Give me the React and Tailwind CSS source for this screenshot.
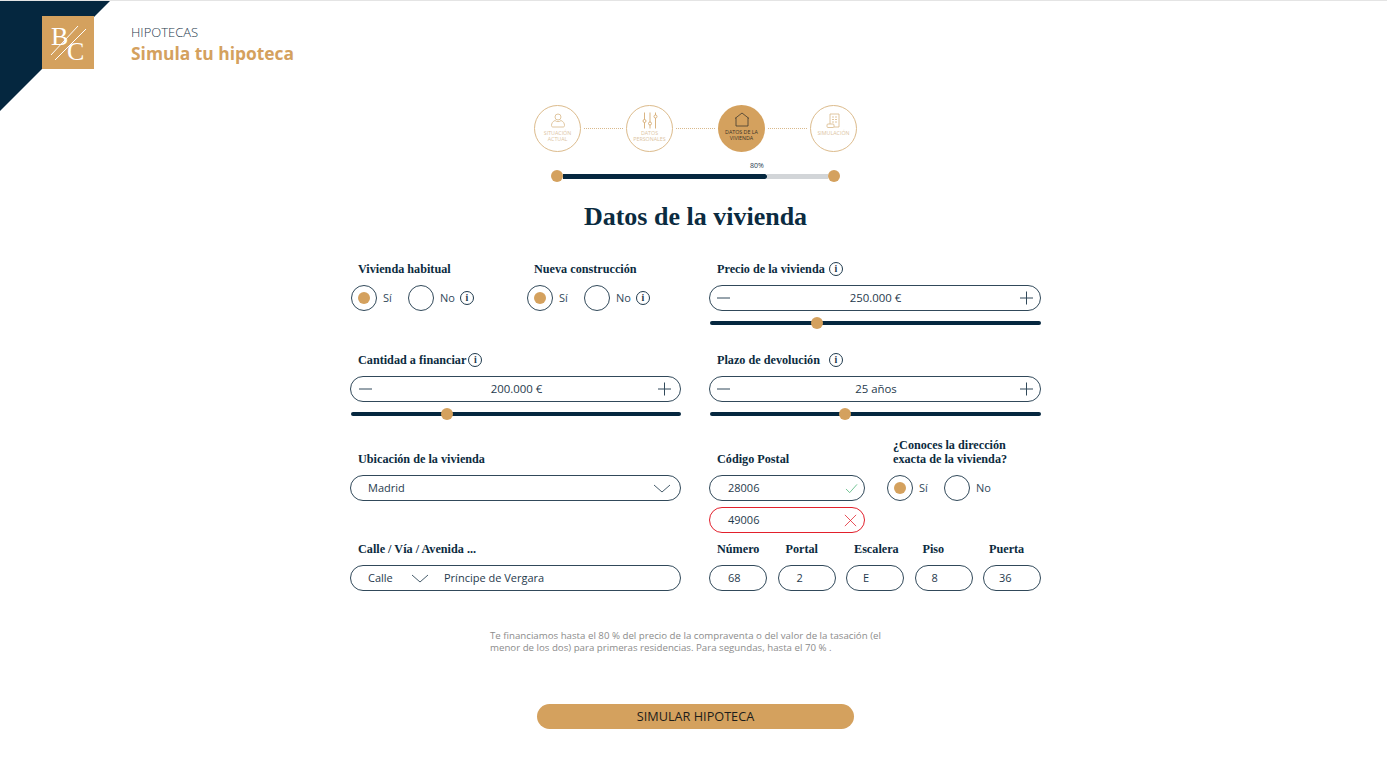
const serif = "font-['Liberation_Serif',serif] font-bold text-[12.2px] text-[#0b2b40]";
const pill = "flex h-[26px] items-center rounded-full border border-[#31495a] bg-white text-[11px] text-[#1f3a4d]";

const Info = () => (
  <span className="flex h-[14px] w-[14px] shrink-0 items-center justify-center rounded-full border border-[#1f3a4d] font-['Liberation_Serif',serif] text-[10px] font-bold leading-none text-[#1f3a4d]">
    i
  </span>
);

const Chevron = () => (
  <svg width="18" height="9" viewBox="0 0 18 9" fill="none" stroke="#31495a" strokeWidth="0.9">
    <path d="M1 1l8 7 8-7" />
  </svg>
);

const Radio = ({ label, checked, info }) => (
  <div className="flex items-center">
    <span className="flex h-[26px] w-[26px] items-center justify-center rounded-full border border-[#31495a]">
      {checked && <span className="h-3 w-3 rounded-full bg-[#d4a15e]" />}
    </span>
    <span className="ml-[6px] text-[11px] text-[#31495a]">{label}</span>
    {info && (
      <span className="ml-[5px]">
        <Info />
      </span>
    )}
  </div>
);

const YesNo = ({ info }) => (
  <div className="flex items-center pl-[1px]">
    <div className="w-[57px]">
      <Radio label="Sí" checked />
    </div>
    <Radio label="No" info={info} />
  </div>
);

const Stepper = ({ value, thumb, pad, shift }) => (
  <div>
    <div className={`${pill} justify-between ${pad}`}>
      <svg width="14" height="14" viewBox="0 0 14 14" stroke="#31495a">
        <path d="M0 7h13" />
      </svg>
      <span className={`text-[11.4px] ${shift}`}>{value}</span>
      <svg width="14" height="14" viewBox="0 0 14 14" stroke="#31495a">
        <path d="M1 7h13M7.500 0.500v13" />
      </svg>
    </div>
    <div className="relative ml-[1px] mt-[10px] h-1 rounded-full bg-[#05273f]">
      <span className={`absolute top-[-4px] h-3 w-3 rounded-full bg-[#d4a15e] ${thumb}`} />
    </div>
  </div>
);

const StepCircle = ({ icon, lines, active }) => (
  <div
    className={
      active
        ? "flex h-[47px] w-[47px] shrink-0 flex-col items-center rounded-full bg-[#d4a15e] pt-[6px] text-[#3a3328]"
        : "flex h-[47px] w-[47px] shrink-0 flex-col items-center rounded-full border border-[#dcbb8c] pt-[6px] text-[#dcc4a2]"
    }
  >
    <div className="flex h-[17px] items-center">{icon}</div>
    <div className="mt-[1px] text-center text-[5.3px] uppercase leading-[6px]">
      {lines.map((l) => (
        <div key={l}>{l}</div>
      ))}
    </div>
  </div>
);

const Dots = () => <div className="mx-[3px] flex-1 border-t border-dotted border-[#d9b98c]" />;

const PersonIcon = () => (
  <svg width="16" height="16" viewBox="0 0 16 16" fill="none" stroke="#d8b888" strokeWidth="0.8">
    <circle cx="8" cy="4" r="3" />
    <path d="M5 7.500C2.500 8.500 1.500 10.500 1.500 12.500c0 1 .5 1.500 1.500 1.500h10c1 0 1.500-.5 1.500-1.500 0-2-1-4-3.500-5-1.500 1.500-4.500 1.500-6 0z" />
  </svg>
);

const SlidersIcon = () => (
  <svg width="16" height="17" viewBox="0 0 16 17" fill="none" stroke="#d0a263" strokeWidth="0.8">
    <path d="M2.500 0.500v7M2.500 10.500v6M8 0.500v9.500M8 13v3.500M13.500 0.500v2.500M13.500 6v10.500" />
    <circle cx="2.500" cy="9" r="1.500" />
    <circle cx="8" cy="11.500" r="1.500" />
    <circle cx="13.500" cy="4.500" r="1.500" />
  </svg>
);

const HouseIcon = () => (
  <svg width="16" height="15" viewBox="0 0 16 15" fill="none" stroke="#3f3a30" strokeWidth="0.8">
    <path d="M1 6.500L8 1l7 5.500M2 5.700V14h12V5.700" />
  </svg>
);

const DocIcon = () => (
  <svg width="15" height="16" viewBox="0 0 15 16" fill="none" stroke="#d8b888" strokeWidth="0.8">
    <path d="M4 11V1h9v13H8" />
    <path d="M6 4h5M6 6.500h5M6 9h5" strokeDasharray="2 1" />
    <rect x="1" y="11" width="7" height="3.500" rx="1" />
  </svg>
);

const Logo = () => (
  <svg width="52" height="53" viewBox="0 0 52 53" className="block bg-[#d4a15e]">
    <text x="9" y="29" fill="#fff" fontFamily="Liberation Serif" fontSize="26">B</text>
    <text x="25" y="44" fill="#fff" fontFamily="Liberation Serif" fontSize="26">C</text>
    <path d="M9 39L36 10M13 44L44 13" stroke="#fff" strokeWidth="1" />
  </svg>
);

const Field = ({ label, children, className }) => (
  <div className={className}>
    <div className="mb-[6px] flex h-5 items-center pl-2">
      <span className={serif}>{label}</span>
    </div>
    {children}
  </div>
);

const LabelInfo = ({ children, gap }) => (
  <span className={`flex items-center ${gap}`}>
    {children}
    <Info />
  </span>
);

const small = [
  { label: "Número", value: "68", pad: "pl-[18px]", labelPad: "pl-2" },
  { label: "Portal", value: "2", pad: "pl-[18px]", labelPad: "pl-2" },
  { label: "Escalera", value: "E", pad: "pl-[16px]", labelPad: "pl-2" },
  { label: "Piso", value: "8", pad: "pl-[16px]", labelPad: "pl-2" },
  { label: "Puerta", value: "36", pad: "pl-[15px]", labelPad: "pl-[6px]" },
];

export default function App() {
  return (
    <div className="relative h-[780px] overflow-hidden border-t border-[#e4e4e4] bg-white font-['Open_Sans',sans-serif]">
      <div className="absolute left-0 top-0 h-[110px] w-[110px] bg-[#05273f] [clip-path:polygon(0_0,100%_0,0_100%)]" />

      <header className="relative flex pl-[42px] pt-[15px]">
        <Logo />
        <div className="ml-[37px] pt-[7px]">
          <div className="text-[13px] font-light leading-[18px] text-[#1f3a4d]">HIPOTECAS</div>
          <div className="text-[17.4px] font-bold leading-[24px] text-[#d4a15e]">Simula tu hipoteca</div>
        </div>
      </header>

      <div className="pl-[4px]">
        <div className="mx-auto mt-[36px] flex w-[323px] items-center">
          <StepCircle icon={<PersonIcon />} lines={["Situación", "actual"]} />
          <Dots />
          <StepCircle icon={<SlidersIcon />} lines={["Datos", "personales"]} />
          <Dots />
          <StepCircle active icon={<HouseIcon />} lines={["Datos de la", "vivienda"]} />
          <Dots />
          <StepCircle icon={<DocIcon />} lines={["Simulación"]} />
        </div>

        <div className="relative mx-auto mt-[18px] flex h-3 w-[289px] items-center">
          <span className="absolute left-[199px] top-[-9px] text-[7px] leading-[9px] text-[#1f3a4d]">80%</span>
          <span className="h-3 w-3 rounded-full bg-[#d4a15e]" />
          <span className="h-[5px] w-[204px] rounded-r-full bg-[#05273f]" />
          <span className="h-[5px] flex-1 bg-[#d2d5d8]" />
          <span className="h-3 w-3 rounded-full bg-[#d4a15e]" />
        </div>

        <h1 className="mt-[19px] text-center font-['Liberation_Serif',serif] text-[26px] font-bold leading-[32px] text-[#0b2b40]">
          Datos de la vivienda
        </h1>

        <main className="mx-auto mt-[26px] w-[691px]">
          <div className="grid grid-cols-[331px_332px] gap-x-[28px]">
            <div className="flex">
              <Field label="Vivienda habitual" className="w-[176px]">
                <YesNo info />
              </Field>
              <Field label="Nueva construcción">
                <YesNo info />
              </Field>
            </div>
            <Field label={<LabelInfo gap="gap-[4px]">Precio de la vivienda</LabelInfo>}>
              <Stepper value="250.000 €" thumb="left-[101px]" pad="pl-[7px] pr-[7px]" shift="ml-[1px]" />
            </Field>
          </div>

          <div className="mt-[25px] grid grid-cols-[331px_332px] gap-x-[28px]">
            <Field label={<LabelInfo gap="gap-[2px]">Cantidad a financiar</LabelInfo>}>
              <Stepper value="200.000 €" thumb="left-[90px]" pad="pl-[8px] pr-[9px]" shift="ml-[3px]" />
            </Field>
            <Field label={<LabelInfo gap="gap-[9px]">Plazo de devolución</LabelInfo>}>
              <Stepper value="25 años" thumb="left-[129px]" pad="pl-[7px] pr-[7px]" shift="ml-[2px]" />
            </Field>
          </div>

          <div className="mt-[33px] grid grid-cols-[331px_332px] gap-x-[28px]">
            <Field label="Ubicación de la vivienda">
              <div className={`${pill} justify-between pl-[17px] pr-[9px]`}>
                <span>Madrid</span>
                <Chevron />
              </div>
            </Field>
            <div className="flex gap-[22px]">
              <div className="w-[156px]">
                <Field label="Código Postal">
                  <div className={`${pill} justify-between pl-[18px] pr-[6px]`}>
                    <span>28006</span>
                    <svg width="13" height="11" viewBox="0 0 14 12" fill="none" stroke="#3fae6e" strokeWidth="0.8">
                      <path d="M1 6.500l4 4 8-9" />
                    </svg>
                  </div>
                  <div className={`${pill} mt-[6px] justify-between border-[#e2202c] pl-[18px] pr-[7px]`}>
                    <span>49006</span>
                    <svg width="13" height="13" viewBox="0 0 15 15" fill="none" stroke="#e2202c" strokeWidth="0.9">
                      <path d="M1 1l13 13M14 1L1 14" />
                    </svg>
                  </div>
                </Field>
              </div>
              <div className="-mt-[11px]">
                <div className={`${serif} pl-[6px] leading-[14px]`}>
                  ¿Conoces la dirección
                  <br />
                  exacta de la vivienda?
                </div>
                <div className="mt-[9px] flex items-center">
                  <div className="w-[57px]">
                    <Radio label="Sí" checked />
                  </div>
                  <Radio label="No" />
                </div>
              </div>
            </div>
          </div>

          <div className="mt-[6px] grid grid-cols-[331px_332px] gap-x-[28px]">
            <Field label="Calle / Vía / Avenida ...">
              <div className={`${pill} pl-[17px]`}>
                <span className="w-[43px]">Calle</span>
                <Chevron />
                <span className="ml-[15px]">Príncipe de Vergara</span>
              </div>
            </Field>
            <div className="flex justify-between">
              {small.map((f) => (
                <div key={f.label} className="w-[58px]">
                  <div className={`mb-[6px] flex h-5 items-center ${f.labelPad}`}>
                    <span className={serif}>{f.label}</span>
                  </div>
                  <div className={`${pill} ${f.pad}`}>{f.value}</div>
                </div>
              ))}
            </div>
          </div>
        </main>
      </div>

      <p className="ml-[490px] mt-[39px] w-[400px] text-[9.7px] leading-[12px] text-[#8c8c8c]">
        Te financiamos hasta el 80 % del precio de la compraventa o del valor de la tasación (el
        <br />
        menor de los dos) para primeras residencias. Para segundas, hasta el 70 % .
      </p>

      <div className="pl-[4px]">
        <button className="mx-auto mt-[50px] block h-[25px] w-[317px] rounded-full bg-[#d4a15e] text-[12.7px] text-[#1d1d1b]">
          SIMULAR HIPOTECA
        </button>
      </div>
    </div>
  );
}
